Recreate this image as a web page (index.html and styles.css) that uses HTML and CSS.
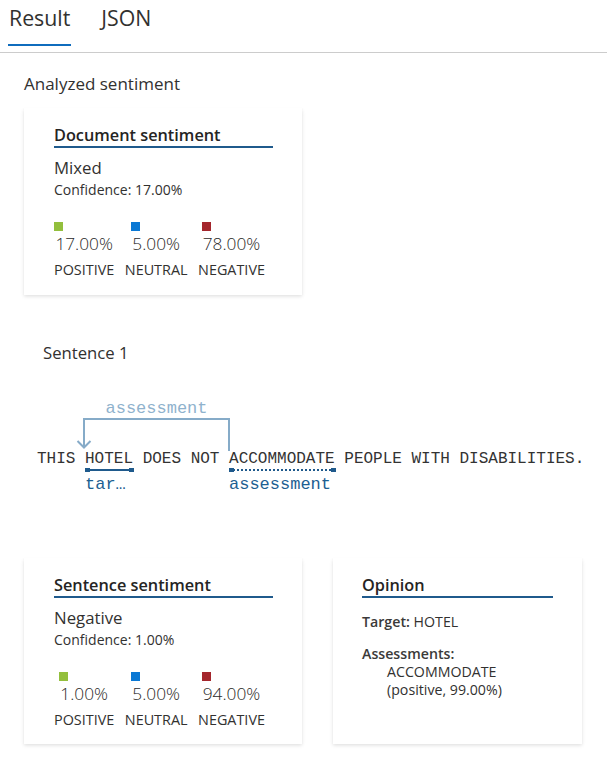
FILE: index.html
```html
<!DOCTYPE html>
<html>
<head>
<meta charset="utf-8">
<link rel="stylesheet" href="styles.css">
</head>
<body>
<div class="tabs">
  <div class="tab active">Result</div>
  <div class="tab">JSON</div>
</div>
<div class="content">
  <h2 class="section-title">Analyzed sentiment</h2>
  <div class="card sent-card">
    <div class="card-title">Document sentiment</div>
    <div class="label-big">Mixed</div>
    <div class="confidence">Confidence: 17.00%</div>
    <div class="scores">
      <div class="score">
        <div class="score-inner"><span class="sq pos"></span><span class="val">17.00%</span></div>
        <div class="score-label">POSITIVE</div>
      </div>
      <div class="score">
        <div class="score-inner"><span class="sq neu"></span><span class="val">5.00%</span></div>
        <div class="score-label">NEUTRAL</div>
      </div>
      <div class="score">
        <div class="score-inner"><span class="sq neg"></span><span class="val">78.00%</span></div>
        <div class="score-label">NEGATIVE</div>
      </div>
    </div>
  </div>

  <div class="sentence-title">Sentence 1</div>

  <div class="diagram">
    <svg class="arcs" width="607" height="110" viewBox="0 0 607 110">
      <path d="M84 52 V23 H229 V55" fill="none" stroke="#86abc8" stroke-width="2"/>
      <path d="M77.5 45 L84 51.5 L90.5 45" fill="none" stroke="#86abc8" stroke-width="2"/>
    </svg>
    <div class="arc-label">assessment</div>
    <div class="sentence">THIS <span class="tok target">HOTEL</span> DOES NOT <span class="tok assess">ACCOMMODATE</span> PEOPLE WITH DISABILITIES.</div>
    <div class="tok-label tl-target">tar…</div>
    <div class="tok-label tl-assess">assessment</div>
  </div>

  <div class="bottom-cards">
    <div class="card sent-card">
      <div class="card-title">Sentence sentiment</div>
      <div class="label-big">Negative</div>
      <div class="confidence">Confidence: 1.00%</div>
      <div class="scores">
        <div class="score">
          <div class="score-inner"><span class="sq pos"></span><span class="val">1.00%</span></div>
          <div class="score-label">POSITIVE</div>
        </div>
        <div class="score">
          <div class="score-inner"><span class="sq neu"></span><span class="val">5.00%</span></div>
          <div class="score-label">NEUTRAL</div>
        </div>
        <div class="score">
          <div class="score-inner"><span class="sq neg"></span><span class="val">94.00%</span></div>
          <div class="score-label">NEGATIVE</div>
        </div>
      </div>
    </div>
    <div class="card opinion-card">
      <div class="card-title">Opinion</div>
      <div class="op-row"><span class="op-key">Target:</span> HOTEL</div>
      <div class="op-row op-assess"><span class="op-key">Assessments:</span></div>
      <div class="op-indent">ACCOMMODATE<br>(positive, 99.00%)</div>
    </div>
  </div>
</div>
</body>
</html>
```

FILE: styles.css
```css
* { box-sizing: border-box; }
html, body { margin: 0; padding: 0; background: #fff; }
body {
  font-family: "Open Sans", "Noto Sans", sans-serif;
  color: #323130;
  width: 607px;
  height: 757px;
  overflow: hidden;
}
.tabs {
  display: flex;
  height: 53px;
  border-bottom: 1px solid #cccccc;
  padding-left: 8px;
  gap: 29px;
}
.tab {
  font-size: 21.3px;
  line-height: 28px;
  padding: 4px 1px 0 1px;
  height: 46px;
  color: #323130;
}
.tab.active {
  border-bottom: 2px solid #0f6cbd;
}
.content { padding-left: 24px; }
.section-title {
  margin: 0;
  font-weight: 400;
  font-size: 17px;
  line-height: 22px;
  padding-top: 20px;
}
.card {
  background: #fff;
  box-shadow: 0 1.6px 3.6px rgba(0,0,0,0.13), 0 0.3px 0.9px rgba(0,0,0,0.11);
}
.sent-card {
  width: 278px;
  height: 187px;
  margin-top: 13px;
  padding: 17px 29px 0 30px;
}
.card-title {
  font-size: 16.3px;
  font-weight: 600;
  line-height: 20px;
  padding-bottom: 1px;
  border-bottom: 2px solid #1f5a8c;
  color: #252423;
}
.label-big {
  font-size: 16.8px;
  line-height: 20px;
  margin-top: 10px;
}
.confidence {
  font-size: 14px;
  line-height: 18px;
  margin-top: 3px;
}
.scores {
  display: flex;
  gap: 10.5px;
  margin-top: 23px;
}
.score {
  display: flex;
  flex-direction: column;
  align-items: center;
}
.score-inner {
  display: flex;
  flex-direction: column;
  align-items: flex-start;
}
.sq {
  display: block;
  width: 9px;
  height: 9px;
  margin-left: -1px;
}
.sq.pos { background: #93bf3d; }
.sq.neu { background: #0a78d4; }
.sq.neg { background: #a4262c; }
.val {
  font-size: 17.3px;
  font-weight: 300;
  line-height: 22px;
  margin-top: 2px;
  color: #2b2a29;
}
.score-label {
  font-size: 14.4px;
  line-height: 18px;
  margin-top: 6px;
}
.sentence-title {
  font-size: 16.7px;
  line-height: 22px;
  margin-top: 47px;
  padding-left: 19px;
}
.diagram {
  position: relative;
  height: 110px;
  margin-left: -24px;
  margin-top: 32px;
}
.arcs { position: absolute; left: 0; top: 0; }
.arc-label {
  position: absolute;
  left: 84px;
  width: 145px;
  top: 3px;
  text-align: center;
  font-family: "Liberation Mono", "DejaVu Sans Mono", monospace;
  font-size: 17px;
  line-height: 20px;
  color: #8fb2cd;
}
.sentence {
  position: absolute;
  left: 37px;
  top: 53px;
  font-family: "Liberation Mono", "DejaVu Sans Mono", monospace;
  font-size: 16px;
  line-height: 20px;
  white-space: nowrap;
  color: #333;
}
.tok { position: relative; }
.tok::after {
  content: "";
  position: absolute;
  left: 0;
  right: 0;
  top: 19px;
  height: 0;
}
.tok.target::after { border-top: 2px solid #1f5a8c; }
.tok.assess::after { border-top: 2px dotted #1f5a8c; }
.tok::before {
  content: "";
  position: absolute;
  left: 0;
  right: -1px;
  top: 18px;
  height: 4px;
  background:
    linear-gradient(#1f5a8c, #1f5a8c) left top / 5px 4px no-repeat,
    linear-gradient(#1f5a8c, #1f5a8c) right top / 5px 4px no-repeat;
}
.tok-label {
  position: absolute;
  top: 79px;
  font-family: "Liberation Mono", "DejaVu Sans Mono", monospace;
  font-size: 17px;
  line-height: 20px;
  color: #1d5f92;
}
.tl-target { left: 85px; }
.tl-assess { left: 229px; }
.bottom-cards {
  display: flex;
  gap: 31px;
  margin-top: 52px;
}
.bottom-cards .sent-card { margin-top: 0; height: 186px; }
.opinion-card {
  width: 249px;
  height: 186px;
  padding: 17px 29px 0 29px;
}
.op-row {
  font-size: 14.2px;
  line-height: 18px;
  margin-top: 15px;
}
.op-key { font-weight: 600; color: #3b3a39; }
.op-assess { margin-top: 14px; }
.op-indent {
  font-size: 14.2px;
  line-height: 18px;
  padding-left: 25px;
}
```
